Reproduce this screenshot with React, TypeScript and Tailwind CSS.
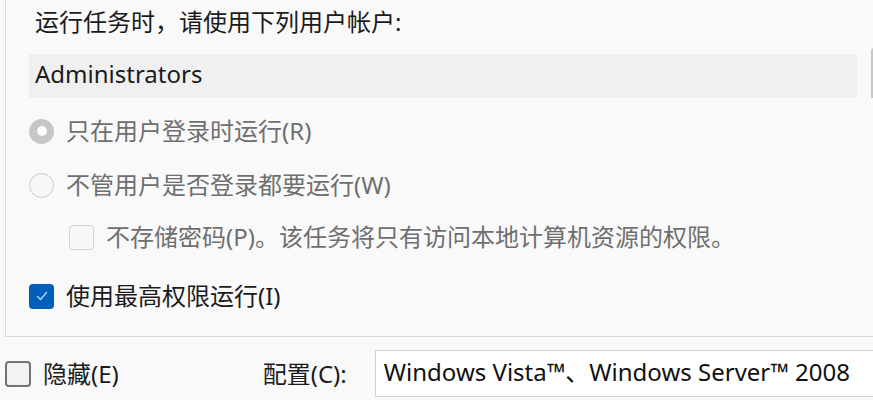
import React from 'react';

const font = {
  fontFamily: '"Noto Sans", "Noto Sans CJK SC", sans-serif',
};

function Radio({ checked }: { checked?: boolean }) {
  if (checked) {
    return (
      <span className="flex size-[25px] shrink-0 items-center justify-center rounded-full bg-[#c6c6c6]">
        <span className="size-[10px] rounded-full bg-[#fbfbfb]" />
      </span>
    );
  }
  return (
    <span className="size-[25px] shrink-0 rounded-full border-[1.5px] border-[#cbcbcb] bg-[#f7f7f7]" />
  );
}

function Check({ state }: { state: 'disabled' | 'checked' | 'normal' }) {
  if (state === 'checked') {
    return (
      <span className="flex size-[25px] shrink-0 items-center justify-center rounded-[4px] bg-[#005fb8]">
        <svg width="14" height="14" viewBox="0 0 14 14" fill="none">
          <path
            d="M2.5 7.5 L5.5 10.5 L11.5 3.5"
            stroke="#b9d3ef"
            strokeWidth="1.4"
            strokeLinecap="round"
            strokeLinejoin="round"
          />
        </svg>
      </span>
    );
  }
  if (state === 'disabled') {
    return (
      <span className="size-[25px] shrink-0 rounded-[4px] border border-[#d2d2d2] bg-[#f8f8f8]" />
    );
  }
  return (
    <span className="size-[26px] shrink-0 rounded-[4px] border-2 border-[#737373] bg-[#f2f2f2]" />
  );
}

export default function App() {
  return (
    <div
      className="h-[400px] w-[873px] overflow-hidden whitespace-nowrap bg-[#f9f9f9] text-[24px] leading-none text-[#1b1b1b]"
      style={font}
    >
      {/* account group */}
      <div className="ml-[5px] h-[337px] w-[900px] border-b border-l border-[#dadada]">
        <div className="flex h-[44px] items-center pl-[29px]">
          运行任务时，请使用下列用户帐户:
        </div>

        <div className="mt-[4px] flex items-start pl-[23px]">
          <div className="mt-[6px] flex h-[44px] w-[828px] items-center bg-[#f0f0f0] pb-[4px] pl-[6px]">
            Administrators
          </div>
          <div className="ml-[14px] h-[50px] w-[20px] rounded-tl-[3px] border-l-2 border-t border-[#c8c8c8] bg-[#fbfbfb]" />
        </div>

        <div className="mt-[6px] flex h-[54px] items-center gap-[12px] pl-[23px] text-[#6f6f6f]">
          <Radio checked />
          <span>只在用户登录时运行(R)</span>
        </div>
        <div className="flex h-[54px] items-center gap-[12px] pl-[23px] text-[#6f6f6f]">
          <Radio />
          <span>不管用户是否登录都要运行(W)</span>
        </div>
        <div className="flex h-[50px] items-center gap-[12px] pl-[63px] text-[#6f6f6f]">
          <Check state="disabled" />
          <span>不存储密码(P)。该任务将只有访问本地计算机资源的权限。</span>
        </div>
        <div className="mt-[8px] flex h-[52px] items-center gap-[12px] pl-[23px]">
          <Check state="checked" />
          <span>使用最高权限运行(I)</span>
        </div>
      </div>

      {/* bottom row */}
      <div className="mt-[13px] flex h-[47px] items-center pl-[5px]">
        <Check state="normal" />
        <span className="ml-[12px] shrink-0">隐藏(E)</span>
        <span className="ml-[144px] w-[100px] shrink-0">配置(C):</span>
        <div className="ml-[12px] flex h-[47px] w-[520px] shrink-0 items-center border border-[#d2d2d2] bg-white pb-[3px] pl-[8px] text-[#111]">
          Windows Vista™、Windows Server™ 2008
        </div>
      </div>
    </div>
  );
}
